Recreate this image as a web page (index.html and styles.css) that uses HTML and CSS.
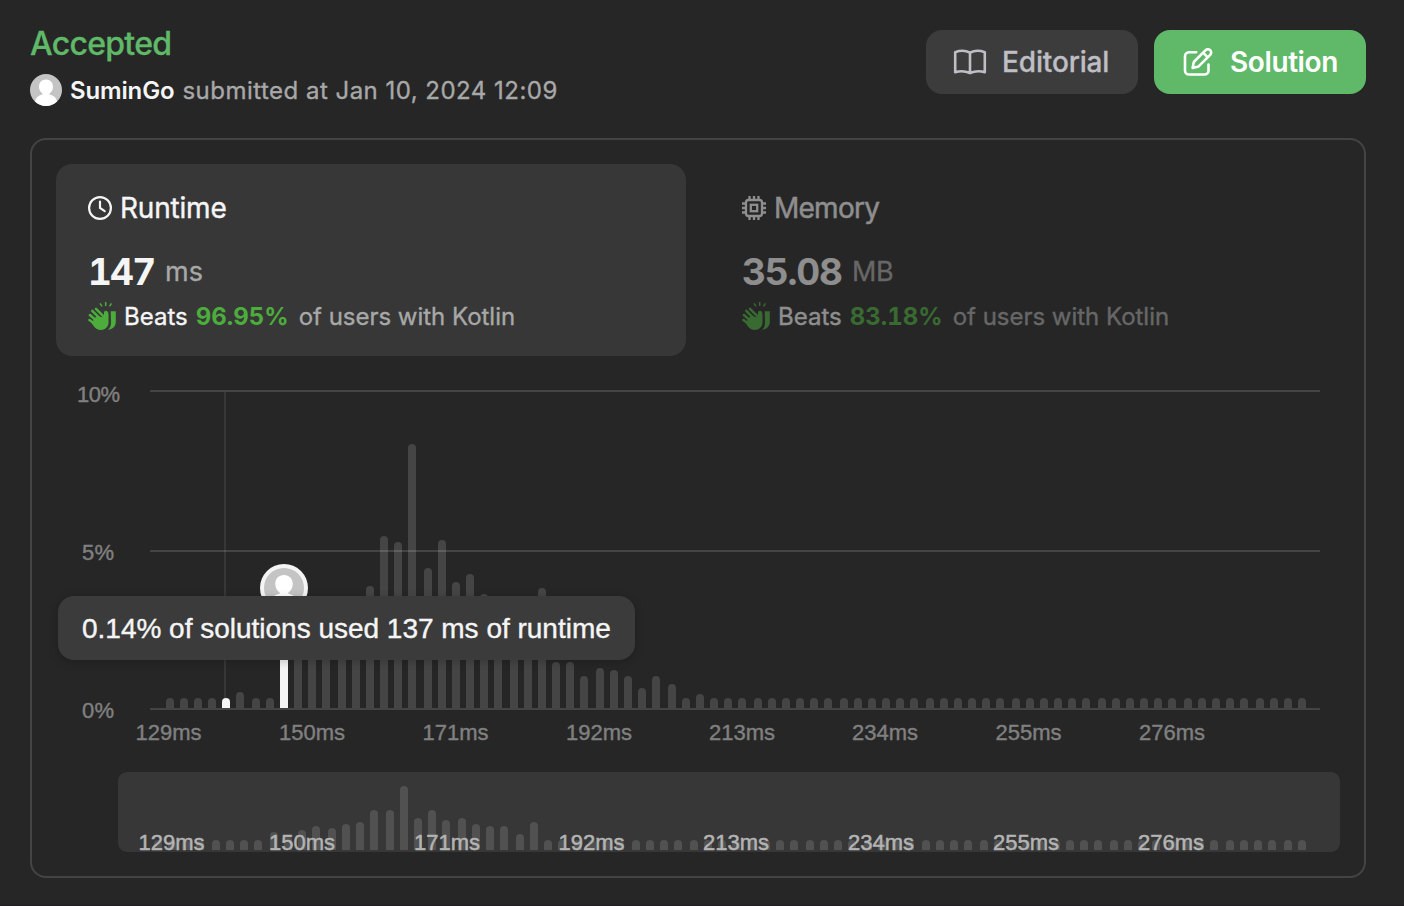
FILE: index.html
```html
<!DOCTYPE html>
<html lang="en">
<head>
<meta charset="utf-8">
<title>Submission</title>
<link rel="stylesheet" href="styles.css">
</head>
<body>
<svg class="defs" width="0" height="0" aria-hidden="true">
  <symbol id="clap" viewBox="0 0 28 28">
    <g fill="none" stroke="currentColor" stroke-linecap="round">
      <path d="M12 1.400l2 3M17.700 0v4M23.500 1.400l-2 3" stroke-width="1.500" stroke-linecap="butt"/>
      <path d="M8 6.800l9 9M4.300 8.800l9 9M1.900 13l8 7M1.400 18l7 5" stroke-width="2.500"/>
    </g>
    <path fill="currentColor" d="M8.500 14l7.500 1.500V11c0-1.500.8-2.200 1.700-2.200 1.700 0 2.800 1.700 2.800 3.700v8c0 4.300-3.500 7.500-7.700 7.500-3 0-5-1.200-6.800-3.500L3.500 21z"/>
    <path fill="currentColor" d="M22.700 9.300h5.100v10.500c0 4.500-3 7.500-8 8.200 2.300-1.800 3.200-4.200 3.200-7.500z"/>
  </symbol>
  <symbol id="person" viewBox="0 0 32 32">
    <circle cx="16" cy="16" r="16" fill="#c4c4c4"/>
    <path fill="#fff" d="M16 5.500c4.200 0 7 3 7 7.200 0 3-1.500 5.500-3.500 6.800v1c4.500 1 7 3.500 7.500 7C24 30.300 20.300 32 16 32s-8-1.700-11-4.500c.5-3.500 3-6 7.500-7v-1C10.500 18.200 9 15.700 9 12.700c0-4.200 2.800-7.200 7-7.200z"/>
  </symbol>
</svg>
<header class="header">
  <div>
    <h1 class="status">Accepted</h1>
    <div class="byline">
      <svg class="avatar"><use href="#person"/></svg>
      <span class="user">SuminGo</span>
      <span class="date">submitted at Jan 10, 2024 12:09</span>
    </div>
  </div>
  <div class="actions">
    <button class="button editorial">
      <svg width="34" height="28" viewBox="0 0 34 28" fill="none" stroke="currentColor" stroke-width="2.600" stroke-linejoin="round"><path d="M17 4.600C12.500 2.400 7 2.400 2.200 4.200v20c4.500-1.400 10-1.400 14.800 1 4.800-2.400 10.300-2.400 14.800-1v-20C27 2.400 21.500 2.400 17 4.600zM17 4.600v20.600"/></svg>
      <span>Editorial</span>
    </button>
    <button class="button solution">
      <svg width="30" height="30" viewBox="0 0 30 30" fill="none" stroke="currentColor" stroke-width="2.600" stroke-linejoin="round" stroke-linecap="round"><path d="M13.200 5.200H6a4 4 0 0 0-4 4V23.500a4 4 0 0 0 4 4H21.500a4 4 0 0 0 4-4V17.500"/><path d="M9.600 21l1.200-6L22.600 3.200a3 3 0 0 1 4.600 4.600L15.600 19.400zM20.100 5.700l4.600 4.600"/></svg>
      <span>Solution</span>
    </button>
  </div>
</header>
<main class="panel">
  <div class="tabs">
    <section class="tab active">
      <h2 class="tab-title">
        <svg width="24" height="24" viewBox="0 0 24 24" fill="none" stroke="currentColor" stroke-width="2.200" stroke-linecap="round"><circle cx="12" cy="12" r="10.900"/><path d="M12 5.500V12l4.700 3.200"/></svg>
        <span>Runtime</span>
      </h2>
      <p class="metric"><strong class="runtime-value">147</strong><span class="unit">ms</span></p>
      <p class="beats"><svg class="clap"><use href="#clap"/></svg><span class="label">Beats</span><strong class="percent">96.95%</strong><span class="rest">of users with Kotlin</span></p>
    </section>
    <section class="tab inactive">
      <h2 class="tab-title memory-title">
        <svg width="24" height="24" viewBox="0 0 24 24" fill="none" stroke="currentColor" stroke-width="2.300"><rect x="4" y="4" width="16" height="16" rx="2.500"/><rect x="8.800" y="8.800" width="6.400" height="6.400"/><path d="M7.500 0v4M12 0v4M16.500 0v4M7.500 20v4M12 20v4M16.500 20v4M0 7.500h4M0 12h4M0 16.500h4M20 7.500h4M20 12h4M20 16.500h4"/></svg>
        <span>Memory</span>
      </h2>
      <p class="metric"><strong class="memory-value">35.08</strong><span class="unit">MB</span></p>
      <p class="beats"><svg class="clap"><use href="#clap"/></svg><span class="label">Beats</span><strong class="percent">83.18%</strong><span class="rest">of users with Kotlin</span></p>
    </section>
  </div>
  <div class="chart">
    <svg class="plot" width="1284" height="496" viewBox="56 356 1284 496">
      <g id="bars" class="bars"></g>
      <path class="grid" d="M150 391H1320M150 551H1320M150 709H1320"/>
      <path class="cursor" d="M225 392V698"/>
      <g class="axis">
        <text x="77" y="402" textLength="43">10%</text>
        <text x="82" y="560" textLength="32">5%</text>
        <text x="82" y="718" textLength="32">0%</text>
      </g>
      <g id="ticks" class="axis"></g>
      <circle cx="284" cy="588" r="24" fill="#f5f5f5"/>
      <use href="#person" x="264" y="568" width="40" height="40"/>
      <rect class="brush" x="118" y="772" width="1222" height="80" rx="9"/>
      <g id="mini-bars" class="mini-bars"></g>
      <g id="mini-ticks" class="mini-axis"></g>
    </svg>
    <div class="tooltip"><span>0.14% of solutions used 137 ms of runtime</span></div>
  </div>
</main>
<script src="chart.js"></script>
</body>
</html>
```

FILE: styles.css
```css
* { box-sizing: border-box; }
body {
  margin: 0;
  height: 906px;
  padding: 30px 38px 0 30px;
  overflow: hidden;
  background: #262626;
  color: #f5f5f5;
  font-family: Inter, "Liberation Sans", sans-serif;
  border-bottom: 1px solid #211d20;
}
h1, h2, p { margin: 0; font-weight: 400; }
svg { display: block; flex: none; }
.defs { position: absolute; }
.header { display: flex; justify-content: space-between; height: 108px; }
.status { color: #5fb968; font-size: 32px; line-height: 27px; font-weight: 500; letter-spacing: -0.72px; -webkit-text-stroke: .3px; }
.byline { display: flex; align-items: center; margin-top: 17px; height: 32px; font-size: 24px; }
.avatar { width: 32px; height: 32px; }
.user { margin-left: 8px; font-weight: 600; letter-spacing: -.15px; }
.date { margin-left: 8px; color: #a8a8a8; letter-spacing: .48px; white-space: nowrap; -webkit-text-stroke: .35px; }
.actions { display: flex; gap: 16px; }
.button {
  display: flex;
  align-items: center;
  width: 212px;
  height: 64px;
  padding: 0 0 0 27px;
  border: 0;
  border-radius: 16px;
  font: 500 28px Inter, sans-serif;
  white-space: nowrap;
}
.editorial { gap: 15px; background: #3c3c3c; color: #bebec4; letter-spacing: -.15px; -webkit-text-stroke: .3px; }
.solution { gap: 17px; padding-left: 29px; background: #5fb968; color: #fff; font-weight: 600; letter-spacing: -.4px; }
.panel { width: 1336px; height: 740px; padding: 24px; border: 2px solid #444; border-radius: 16px; }
.tabs { display: grid; grid-template-columns: 1fr 1fr; gap: 24px; }
.tab { height: 192px; padding: 28px 32px; border-radius: 16px; }
.active { background: #373737; }
.inactive { opacity: .5; }
.tab-title { display: flex; align-items: center; gap: 8px; height: 32px; font-size: 28px; letter-spacing: -.2px; white-space: nowrap; -webkit-text-stroke: .4px; }
.memory-title { letter-spacing: -.75px; }
.metric { display: flex; align-items: center; margin-top: 24px; height: 48px; line-height: 48px; }
.metric strong { font-size: 37px; font-weight: 700; font-variant-numeric: tabular-nums; }
.metric .runtime-value { width: 68px; letter-spacing: -1.8px; }
.metric .memory-value { width: 101px; letter-spacing: -1.2px; }
.unit { margin-left: 9px; color: #a8a8a8; font-size: 27px; -webkit-text-stroke: .3px; }
.memory-value + .unit { letter-spacing: -.5px; }
.beats { display: flex; align-items: center; margin-top: 4px; height: 32px; font-size: 24px; white-space: nowrap; }
.clap { width: 28px; height: 28px; color: #4cad3c; }
.label { margin-left: 8px; -webkit-text-stroke: .35px; }
.percent { width: 95px; margin-left: 8px; color: #4cad3c; font-weight: 700; font-variant-numeric: tabular-nums; }
.rest { margin-left: 8px; color: #a8a8a8; letter-spacing: -.02px; -webkit-text-stroke: .35px; }
.chart { position: relative; }
.plot { overflow: visible; }
.bars { fill: #454545; }
.bars .highlight { fill: #f5f5f5; }
.mini-bars { fill: #515151; }
.grid { stroke: rgba(255, 255, 255, .14); stroke-width: 2; }
.cursor { stroke: rgba(255, 255, 255, .08); stroke-width: 2; }
.axis { fill: #808080; stroke: #808080; stroke-width: .4; font: 22px "Liberation Sans", Arial, sans-serif; }
.mini-axis { fill: #b4b4b4; stroke: #b4b4b4; stroke-width: .5; font: 22px "Liberation Sans", Arial, sans-serif; }
.brush { fill: #373737; }
.tooltip {
  position: absolute;
  left: 2px;
  top: 240px;
  width: 577px;
  height: 64px;
  padding-left: 24px;
  border-radius: 16px;
  background: #3b3b3b;
  box-shadow: 0 2px 10px rgba(0, 0, 0, .2);
  font: 28px/66px "Liberation Sans", Arial, sans-serif;
  letter-spacing: -.01px;
  white-space: nowrap;
  -webkit-text-stroke: .4px;
}
```

FILE: chart.js
```js
const NS = "http://www.w3.org/2000/svg";
const COUNT = 80;
const labels = [129, 150, 171, 192, 213, 234, 255, 276];

// Bar heights by index; every other bar has the minimum height.
const main = {
  5: 16, 8: 120, 9: 60, 10: 64, 11: 70, 12: 76, 13: 84, 14: 122, 15: 172, 16: 166, 17: 264,
  18: 140, 19: 168, 20: 126, 21: 134, 22: 114, 23: 90, 24: 84, 25: 80, 26: 120, 27: 46, 28: 46,
  29: 32, 30: 40, 31: 38, 32: 32, 33: 20, 34: 32, 35: 24, 37: 14
};
const mini = {
  8: 18, 9: 14, 10: 20, 11: 24, 12: 22, 13: 26, 14: 28, 15: 40, 16: 40, 17: 64, 18: 32, 19: 40,
  20: 30, 21: 32, 22: 26, 23: 24, 24: 24, 25: 16, 26: 28
};

function drawBars(id, data, start, step, base, highlighted) {
  const group = document.getElementById(id);
  for (let i = 0; i < COUNT; i++) {
    const x = Math.floor((start + i * step) / 2) * 2;
    const height = data[i] || 10;
    const bar = document.createElementNS(NS, "path");
    bar.setAttribute("d", `M${x} ${base}v${4 - height}a4 4 0 0 1 8 0V${base}z`);
    if (highlighted.includes(i)) bar.setAttribute("class", "highlight");
    group.append(bar);
  }
}

function drawTicks(id, positions, y) {
  const group = document.getElementById(id);
  labels.forEach((value, i) => {
    const text = document.createElementNS(NS, "text");
    text.setAttribute("x", positions[i]);
    text.setAttribute("y", y);
    text.setAttribute("textLength", 66);
    text.textContent = value + "ms";
    group.append(text);
  });
}

drawBars("bars", main, 166.04, 14.342, 708, [4, 8]);
drawBars("mini-bars", mini, 154.25, 14.487, 850, []);
drawTicks("ticks", [135.5, 279, 422.500, 566, 709, 852, 995.500, 1139], 740);
drawTicks("mini-ticks", [138.500, 269, 414, 558.500, 703, 848, 993, 1138], 850);
```
